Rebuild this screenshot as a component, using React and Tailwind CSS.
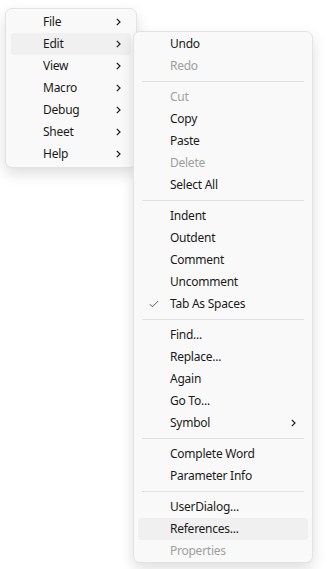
import React from 'react'

const mainItems = ['File', 'Edit', 'View', 'Macro', 'Debug', 'Sheet', 'Help']

// null = separator
const editItems = [
	{ label: 'Undo' },
	{ label: 'Redo', disabled: true },
	null,
	{ label: 'Cut', disabled: true },
	{ label: 'Copy' },
	{ label: 'Paste' },
	{ label: 'Delete', disabled: true },
	{ label: 'Select All' },
	null,
	{ label: 'Indent' },
	{ label: 'Outdent' },
	{ label: 'Comment' },
	{ label: 'Uncomment' },
	{ label: 'Tab As Spaces', checked: true },
	null,
	{ label: 'Find...' },
	{ label: 'Replace...' },
	{ label: 'Again' },
	{ label: 'Go To...' },
	{ label: 'Symbol', sub: true },
	null,
	{ label: 'Complete Word' },
	{ label: 'Parameter Info' },
	null,
	{ label: 'UserDialog...' },
	{ label: 'References...', hover: true },
	{ label: 'Properties', disabled: true },
]

const Chevron = () => (
	<svg width="5" height="8" viewBox="0 0 5 8" className="shrink-0">
		<path d="M0.8 0.8 L4 4 L0.8 7.2" fill="none" stroke="#1a1a1a" strokeWidth="1.2" />
	</svg>
)

const Check = () => (
	<svg width="10" height="8" viewBox="0 0 10 8">
		<path d="M0.8 4.2 L3.4 6.8 L9.2 1" fill="none" stroke="#5a5a5a" strokeWidth="1" />
	</svg>
)

const menuBox =
	'bg-[#f9f9f9] border border-[#e3e3e3] rounded-[7px] shadow-[0_6px_14px_rgba(0,0,0,0.13)]'

export default function App() {
	return (
		<div
			className="relative w-[327px] h-[569px] bg-white text-[12px] tracking-[-0.25px] text-[#1a1a1a]"
			style={{ fontFamily: '"Segoe UI", "Noto Sans", sans-serif' }}
		>
			{/* main menu */}
			<div className={`absolute left-[5px] top-[8px] w-[132px] px-[5px] py-[2px] ${menuBox}`}>
				{mainItems.map((item) => (
					<div
						key={item}
						className={`flex items-center h-[22px] pl-[32px] pr-[10px] rounded-[4px] ${
							item === 'Edit' ? 'bg-[#f0f0f0]' : ''
						}`}
					>
						<span className="flex-1 leading-none">{item}</span>
						<Chevron />
					</div>
				))}
			</div>

			{/* edit submenu */}
			<div className={`absolute left-[133px] top-[31px] w-[180px] px-[4px] pt-[1px] ${menuBox}`}>
				{editItems.map((item, idx) =>
					item === null ? (
						<div key={idx} className="py-[4px] px-[4px]">
							<div className="h-px bg-[#e0e0e0]" />
						</div>
					) : (
						<div
							key={idx}
							className={`relative flex items-center h-[22px] pl-[32px] pr-[12px] rounded-[4px] ${
								item.hover ? 'bg-[#f0f0f0]' : ''
							} ${item.disabled ? 'text-[#a0a0a0]' : ''}`}
						>
							{item.checked && (
								<span className="absolute left-[11px] top-[7px]">
									<Check />
								</span>
							)}
							<span className="flex-1 leading-none">{item.label}</span>
							{item.sub && <Chevron />}
						</div>
					)
				)}
			</div>
		</div>
	)
}
